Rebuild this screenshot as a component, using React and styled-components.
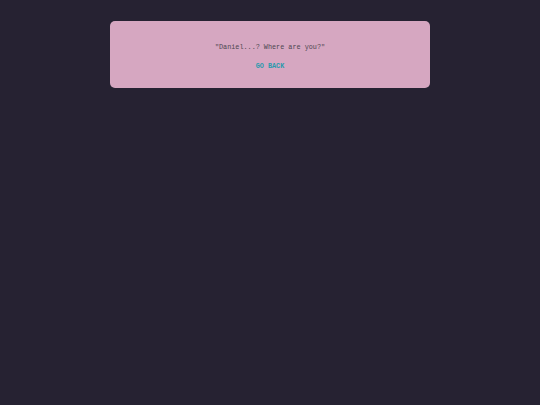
import React from "react";
import styled, { createGlobalStyle } from "styled-components";

const Global = createGlobalStyle`
  html, body {
    margin: 0;
    padding: 0;
    background: #262232;
    height: 100%;
  }
  #root {
    min-height: 100vh;
  }
`;

const Page = styled.div`
  display: flex;
  justify-content: center;
  padding-top: 21px;
  font-family: "Liberation Mono", "Courier New", monospace;
`;

const Card = styled.div`
  width: 320px;
  height: 67px;
  box-sizing: border-box;
  background: #d6a7c1;
  border-radius: 5px;
  display: flex;
  flex-direction: column;
  align-items: center;
  padding-top: 22px;
`;

const Message = styled.p`
  margin: 0;
  font-size: 6.8px;
  line-height: 9px;
  color: #4e4852;
`;

const BackLink = styled.a`
  margin-top: 10px;
  font-size: 6.8px;
  line-height: 9px;
  font-weight: bold;
  color: #2a9aad;
  text-decoration: none;
  cursor: pointer;
`;

export default function App() {
  return (
    <>
      <Global />
      <Page>
        <Card>
          <Message>"Daniel...? Where are you?"</Message>
          <BackLink href="#">GO BACK</BackLink>
        </Card>
      </Page>
    </>
  );
}
